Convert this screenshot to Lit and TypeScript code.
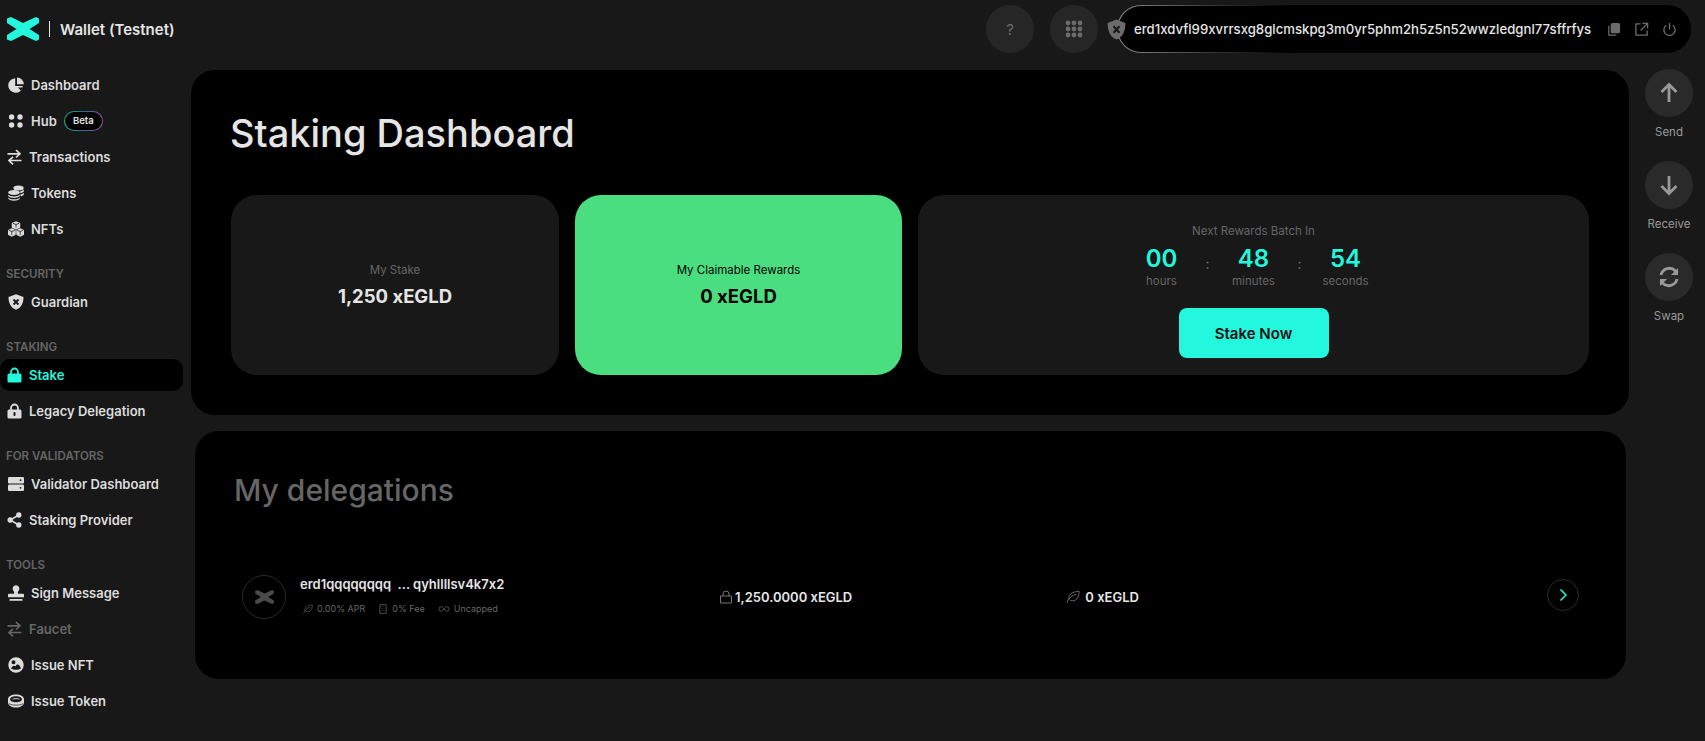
import { LitElement, html, css, svg } from "lit";
import { customElement } from "lit/decorators.js";

const icons: Record<string, any> = {
  pie: svg`<path d="M7.200 1.200A7.300 7.300 0 1 0 14.800 9H7.200Z"/><path d="M9 .4a6.800 6.800 0 0 1 6.800 6.800H9Z"/><path d="M10 10.400h5l-2 3.300Z" fill="#181818"/>`,
  dots: svg`<circle cx="3.600" cy="4" r="2.700"/><circle cx="12" cy="4" r="2.700"/><circle cx="3.600" cy="12" r="2.700"/><circle cx="12" cy="12" r="2.700"/>`,
  swap: svg`<path d="M0 4.800h12.500M8.500 1l4 3.800-4 3.700M14 11.500H1.500M5.500 7.800l-4 3.700 4 3.800" fill="none" stroke="currentColor" stroke-width="1.700"/>`,
  coins: svg`<ellipse cx="10.500" cy="3" rx="5.200" ry="2.500"/><path d="M12.300 6.200c1.500-.2 2.800-.8 3.500-1.600v2c-.6.800-2 1.400-3.500 1.600ZM12.500 9.300c1.400-.2 2.700-.8 3.300-1.600v2c-.6.800-1.900 1.400-3.300 1.600Z"/><ellipse cx="6" cy="7.500" rx="5.800" ry="2.600"/><path d="M.2 9.400c1 1.300 3.300 2 5.800 2s4.800-.7 5.800-2v1.600c-1 1.300-3.300 2-5.800 2s-4.800-.7-5.800-2ZM.2 12.400c1 1.300 3.300 1.900 5.800 1.900s4.800-.6 5.800-1.900v1.400c-1 1.300-3.300 2-5.800 2s-4.800-.7-5.800-2Z"/>`,
  cubes: svg`<path d="M8 .3 12.200 2v4.700L8 8.400 3.800 6.700V2Z"/><path d="M3.800 7.300 7.700 9v4.700L3.800 15.700 0 13.700V9ZM12.200 7.300 16 9v4.700l-3.800 2-3.900-2V9Z"/><path d="M8 3.500 5 2.300M8 3.500l3-1.200M8 3.500v3M3.800 10.500.8 9.300M3.800 10.500l3-1.200M3.800 10.500v3.500M12.200 10.500l-3-1.200M12.200 10.500l3-1.200M12.200 10.500v3.500" stroke="#181818" stroke-width=".8" fill="none"/>`,
  guard: svg`<path d="M8 .3 15.500 3c0 6-2 10.500-7.500 12.700C2.500 13.500.5 9 .5 3Z"/><path d="M5.500 5.500l5 5M10.500 5.500l-5 5" stroke="#181818" stroke-width="1.800"/>`,
  lock: svg`<path d="M3.500 7V5a3.500 3.500 0 0 1 7 0v2" fill="none" stroke="currentColor" stroke-width="1.800"/><rect x="0" y="6.500" width="14" height="9" rx="1.500"/>`,
  lockhole: svg`<path d="M3.500 7V5a3.500 3.500 0 0 1 7 0v2" fill="none" stroke="currentColor" stroke-width="1.800"/><rect x="0" y="6.500" width="14" height="9" rx="1.500"/><rect x="6" y="9" width="2" height="4" rx="1" fill="#181818"/>`,
  server: svg`<rect x="0" y="1" width="16" height="6.400" rx="1.200"/><rect x="0" y="8.600" width="16" height="6.400" rx="1.200"/><circle cx="12.500" cy="4.200" r=".9" fill="#181818"/><circle cx="12.500" cy="11.800" r=".9" fill="#181818"/>`,
  share: svg`<circle cx="11.300" cy="3" r="2.700"/><circle cx="11.300" cy="13" r="2.700"/><circle cx="2.700" cy="8" r="2.700"/><path d="M11.300 3 2.700 8l8.600 5" fill="none" stroke="currentColor" stroke-width="1.500"/>`,
  stamp: svg`<path d="M8 .3a3.400 3.400 0 0 1 2.500 5.700c-.6.700-.8 1.300-.6 2.800H15a1 1 0 0 1 1 1v2.400H0v-2.400a1 1 0 0 1 1-1h5.100c.2-1.500 0-2.100-.6-2.800A3.400 3.400 0 0 1 8 .3Z"/><rect x="1.500" y="14" width="13" height="1.800" rx=".5"/>`,
  face: svg`<path fill-rule="evenodd" d="M8 .3a7.700 7.700 0 1 1 0 15.400A7.700 7.700 0 0 1 8 .3ZM5.500 3.200a2 2 0 1 0 0 4 2 2 0 0 0 0-4ZM3 11.500c1.500-3 3-3.500 4.500-2.200 1.500-2.600 3.800-2.400 5.500 2.200-2.800 1.700-7.200 1.700-10 0Z"/>`,
  ring: svg`<path fill-rule="evenodd" d="M8 1.500c4.400 0 8 1.900 8 4.700v3.300c0 2.900-3.600 5-8 5s-8-2.100-8-5V6.200c0-2.800 3.600-4.700 8-4.700Zm0 1.700c-3.400 0-5.900 1.200-5.900 3s2.500 3 5.900 3 5.900-1.200 5.900-3-2.500-3-5.900-3Z"/><path d="M4.500 6.200c1-.8 6-.8 7 0" stroke="currentColor" stroke-width=".9" fill="none"/><path d="M1 10.500c2 2.200 12 2.200 14 0" stroke="#181818" stroke-width=".7" fill="none"/>`,
};

type NavItem = { label: string; icon: string; narrow?: boolean; active?: boolean; dim?: boolean; badge?: boolean };
type NavGroup = { title?: string; items: NavItem[] };

const nav: NavGroup[] = [
  {
    items: [
      { label: "Dashboard", icon: "pie" },
      { label: "Hub", icon: "dots", badge: true },
      { label: "Transactions", icon: "swap", narrow: true },
      { label: "Tokens", icon: "coins" },
      { label: "NFTs", icon: "cubes" },
    ],
  },
  { title: "SECURITY", items: [{ label: "Guardian", icon: "guard" }] },
  {
    title: "STAKING",
    items: [
      { label: "Stake", icon: "lock", narrow: true, active: true },
      { label: "Legacy Delegation", icon: "lockhole", narrow: true },
    ],
  },
  {
    title: "FOR VALIDATORS",
    items: [
      { label: "Validator Dashboard", icon: "server" },
      { label: "Staking Provider", icon: "share", narrow: true },
    ],
  },
  {
    title: "TOOLS",
    items: [
      { label: "Sign Message", icon: "stamp" },
      { label: "Faucet", icon: "swap", narrow: true, dim: true },
      { label: "Issue NFT", icon: "face" },
      { label: "Issue Token", icon: "ring" },
    ],
  },
];

const leaf = svg`<path d="M1 15c2-6 6-9 11-10M3.500 11C2 6 6 2 15 1.500c0 8-4 12-10 10.500" fill="none" stroke="currentColor" stroke-width="1"/>`;

@customElement("app-root")
export class AppRoot extends LitElement {
  static styles = css`
    :host {
      display: block;
      height: 741px;
      overflow: hidden;
      background: #181818;
      color: #e5e5e5;
      font-family: Inter, "Noto Sans", sans-serif;
      font-feature-settings: "calt" 0;
    }
    .header {
      height: 69px;
      box-sizing: border-box;
      display: flex;
      align-items: center;
      padding: 0 14px 11px 0;
    }
    .logo {
      width: 32px;
      height: 24px;
      margin-left: 7px;
      fill: #23f7dd;
    }
    .bar {
      width: 1px;
      height: 16px;
      background: #e5e5e5;
      margin: 0 10px 0 10px;
    }
    .brand {
      font-size: 15px;
      font-weight: 600;
      color: #e5e5e5;
      flex: 1;
    }
    .round {
      width: 48px;
      height: 48px;
      border-radius: 50%;
      background: #262626;
      color: #6b6b6b;
      display: flex;
      align-items: center;
      justify-content: center;
      font-size: 15px;
      margin-right: 16px;
    }
    .round svg { width: 18px; height: 18px; fill: #6b6b6b; }
    .round.last { margin-right: 9px; }
    .hshield {
      width: 19px;
      height: 21px;
      fill: #6b6b6b;
      margin-right: -9px;
      position: relative;
      z-index: 1;
    }
    .account {
      width: 574px;
      height: 48px;
      box-sizing: border-box;
      border: 1px solid transparent;
      border-radius: 24px;
      background: linear-gradient(#000, #000) padding-box,
        linear-gradient(90deg, #8a8a8a, #333 18%, #000 30%) border-box;
      display: flex;
      align-items: center;
      padding-left: 16px;
      color: #6b6b6b;
    }
    .addr {
      font-size: 13.200px;
      font-weight: 500;
      color: #e5e5e5;
      width: 472px;
      white-space: nowrap;
    }
    .account svg { width: 15px; height: 15px; margin-right: 13px; }
    .layout {
      display: grid;
      grid-template-columns: 191px 1fr 76px;
    }
    .side { display: flex; flex-direction: column; }
    .group { display: flex; flex-direction: column; gap: 4px; }
    .group.titled { margin-top: 18.500px; }
    .gtitle {
      height: 20px;
      line-height: 20px;
      margin-bottom: -1.500px;
      padding-left: 6px;
      font-size: 11.500px;
      font-weight: 600;
      color: #666;
    }
    .item {
      width: 183px;
      height: 32px;
      box-sizing: border-box;
      padding-left: 8px;
      display: flex;
      align-items: center;
      gap: 7px;
      font-size: 13px;
      font-weight: 600;
      color: #dcdcdc;
      border-radius: 10px;
    }
    .item svg { width: 16px; height: 16px; fill: currentColor; flex: none; }
    .item.narrow { padding-left: 7px; gap: 7px; }
    .item.narrow svg { width: 15px; }
    .item.active { background: #000; color: #23f7dd; }
    .item.dim { color: #666; }
    .beta {
      width: 39px;
      height: 20px;
      box-sizing: border-box;
      border: 1px solid transparent;
      border-radius: 10px;
      background: linear-gradient(#000, #000) padding-box,
        linear-gradient(90deg, #1bb98a, #2a6a8a 50%, #a04fa8) border-box;
      font-size: 9.500px;
      line-height: 18px;
      text-align: center;
      color: #e5e5e5;
    }
    .main { padding-top: 1px; display: flex; flex-direction: column; gap: 16px; }
    .card {
      background: #000;
      border-radius: 24px;
    }
    .top { padding: 39px 40px 40px 40px; }
    h1 {
      margin: 0 0 38px -1px;
      font-size: 38px;
      line-height: 48px;
      font-weight: 500;
      color: #e5e5e5;
    }
    .stats {
      display: grid;
      grid-template-columns: 328px 327px 1fr;
      gap: 16px;
    }
    .stat {
      height: 180px;
      box-sizing: border-box;
      padding-top: 1px;
      background: #181818;
      border-radius: 26px;
      display: flex;
      flex-direction: column;
      align-items: center;
      justify-content: center;
      gap: 5px;
    }
    .stat .lbl { font-size: 11.500px; line-height: 16px; color: #666; }
    .stat .val { font-size: 18.500px; line-height: 26px; font-weight: 700; color: #e5e5e5; }
    .stat.green { background: #4ade80; }
    .stat.green .lbl { color: #000; }
    .stat.green .val { color: #000; }
    .stat.timer { justify-content: flex-start; padding-top: 28px; gap: 0; }
    .clock { display: flex; margin-top: 5px; }
    .cell { width: 60px; text-align: center; }
    .digits { font-size: 24px; line-height: 29px; font-weight: 600; color: #23f7dd; }
    .unit { font-size: 11.500px; line-height: 16px; color: #666; }
    .colon { width: 32px; text-align: center; font-size: 14px; line-height: 16px; margin-top: 12px; color: #777; }
    .cta {
      margin-top: 19px;
      width: 150px;
      height: 50px;
      border-radius: 8px;
      background: #23f7dd;
      color: #111;
      font-size: 15px;
      font-weight: 600;
      display: flex;
      align-items: center;
      justify-content: center;
    }
    .delegations {
      margin: 0 3px 0 4px;
      height: 248px;
      box-sizing: border-box;
      padding: 39px 47px 0 39px;
    }
    h2 {
      margin: 0 0 65px;
      font-size: 30px;
      line-height: 40px;
      font-weight: 500;
      color: #666;
    }
    .row {
      display: grid;
      grid-template-columns: 477px 347px 1fr 32px;
      align-items: center;
      padding-left: 8px;
      height: 44px;
    }
    .who { display: flex; align-items: flex-start; gap: 14px; }
    .avatar {
      width: 44px;
      height: 44px;
      box-sizing: border-box;
      border: 1px solid #2a2a2a;
      border-radius: 50%;
      display: flex;
      align-items: center;
      justify-content: center;
    }
    .avatar svg { width: 19px; height: 14px; fill: #4a4a4a; }
    .name {
      font-size: 13px;
      line-height: 18px;
      font-weight: 600;
      color: #e5e5e5;
      white-space: pre;
    }
    .meta {
      margin-top: 9px;
      padding-left: 3px;
      display: flex;
      gap: 13px;
      font-size: 9px;
      line-height: 14px;
      color: #666;
    }
    .meta span { display: flex; align-items: center; gap: 4px; }
    .meta svg { width: 10px; height: 10px; }
    .amount {
      display: flex;
      align-items: center;
      gap: 2px;
      font-size: 13px;
      font-weight: 600;
      color: #e5e5e5;
    }
    .amount svg { width: 14px; height: 14px; color: #777; }
    .go {
      width: 32px;
      height: 32px;
      box-sizing: border-box;
      border: 1px solid #2a2a2a;
      border-radius: 50%;
      display: flex;
      align-items: center;
      justify-content: center;
      margin-top: -4px;
    }
    .go svg { width: 14px; height: 14px; }
    .actions {
      display: flex;
      flex-direction: column;
      align-items: flex-end;
      padding: 0 12px 0 0;
    }
    .act {
      width: 48px;
      display: flex;
      flex-direction: column;
      align-items: center;
      height: 92px;
      font-size: 11.500px;
      color: #999;
      white-space: nowrap;
    }
    .disc {
      width: 48px;
      height: 48px;
      border-radius: 50%;
      background: #2a2a2a;
      display: flex;
      align-items: center;
      justify-content: center;
      margin-bottom: 8px;
      flex: none;
    }
    .disc svg { width: 24px; height: 24px; stroke: #999; fill: none; stroke-width: 2.800; }
  `;

  private xLogo(cls: string) {
    return html`<svg class=${cls} viewBox="0 0 32 24">
      <path d="M0 1.500 4 0 16 6 29 0 32 1.500 32 6 22.500 12 32 18 32 22.500 29 24 16 18 4 24 0 22.500 0 18 9.500 12 0 6Z" />
    </svg>`;
  }

  private renderItem(it: NavItem) {
    const cls = ["item", it.narrow ? "narrow" : "", it.active ? "active" : "", it.dim ? "dim" : ""].join(" ");
    return html`<div class=${cls}>
      <svg viewBox=${it.narrow ? "0 0 14 16" : "0 0 16 16"}>${icons[it.icon]}</svg>
      <span>${it.label}</span>
      ${it.badge ? html`<span class="beta">Beta</span>` : ""}
    </div>`;
  }

  render() {
    return html`
      <div class="header">
        ${this.xLogo("logo")}
        <div class="bar"></div>
        <div class="brand">Wallet (Testnet)</div>
        <div class="round">?</div>
        <div class="round last">
          <svg viewBox="0 0 18 18">
            ${[3, 9, 15].map((y) => [3, 9, 15].map((x) => svg`<circle cx=${x} cy=${y} r="2.400" />`))}
          </svg>
        </div>
        <svg class="hshield" viewBox="0 0 16 16" preserveAspectRatio="none">${icons.guard}</svg>
        <div class="account">
          <div class="addr">erd1xdvfl99xvrrsxg8glcmskpg3m0yr5phm2h5z5n52wwzledgnl77sffrfys</div>
          <svg viewBox="0 0 16 16" fill="currentColor">
            <rect x="5" y="1" width="10" height="11" rx="2" />
            <path d="M3 4v10h8" fill="none" stroke="currentColor" stroke-width="1.300" />
          </svg>
          <svg viewBox="0 0 16 16" fill="none" stroke="currentColor" stroke-width="1.400">
            <path d="M7 2H2v12h12V9M9 1.500h5.500V7M14.500 1.500 7 9" />
          </svg>
          <svg viewBox="0 0 16 16" fill="none" stroke="currentColor" stroke-width="1.400">
            <path d="M8 1v7M4.500 3.500a6 6 0 1 0 7 0" />
          </svg>
        </div>
      </div>
      <div class="layout">
        <nav class="side">
          ${nav.map(
            (g) => html`<div class="group ${g.title ? "titled" : ""}">
              ${g.title ? html`<div class="gtitle">${g.title}</div>` : ""}
              ${g.items.map((it) => this.renderItem(it))}
            </div>`
          )}
        </nav>
        <main class="main">
          <section class="card top">
            <h1>Staking Dashboard</h1>
            <div class="stats">
              <div class="stat">
                <div class="lbl">My Stake</div>
                <div class="val">1,250 xEGLD</div>
              </div>
              <div class="stat green">
                <div class="lbl">My Claimable Rewards</div>
                <div class="val">0 xEGLD</div>
              </div>
              <div class="stat timer">
                <div class="lbl">Next Rewards Batch In</div>
                <div class="clock">
                  <div class="cell"><div class="digits">00</div><div class="unit">hours</div></div>
                  <div class="colon">:</div>
                  <div class="cell"><div class="digits">48</div><div class="unit">minutes</div></div>
                  <div class="colon">:</div>
                  <div class="cell"><div class="digits">54</div><div class="unit">seconds</div></div>
                </div>
                <div class="cta">Stake Now</div>
              </div>
            </div>
          </section>
          <section class="card delegations">
            <h2>My delegations</h2>
            <div class="row">
              <div class="who">
                <div class="avatar">${this.xLogo("")}</div>
                <div>
                  <div class="name">erd1qqqqqqqq  ... qyhllllsv4k7x2</div>
                  <div class="meta">
                    <span><svg viewBox="0 0 16 16">${leaf}</svg>0.00% APR</span>
                    <span>
                      <svg viewBox="0 0 16 16" fill="none" stroke="currentColor" stroke-width="1.200">
                        <path d="M3 1h10v14H3ZM6 4h1M9 4h1M6 7h1M9 7h1M6 10h1M9 10h1" />
                      </svg>0% Fee
                    </span>
                    <span>
                      <svg viewBox="0 0 16 16" style="width:12px" fill="none" stroke="currentColor" stroke-width="1.200">
                        <path d="M8 8C6 5 4.500 4.500 3.300 4.500a3.500 3.500 0 0 0 0 7C4.500 11.500 6 11 8 8s3.500-3.500 4.700-3.500a3.500 3.500 0 0 1 0 7C11.500 11.500 10 11 8 8Z" />
                      </svg>Uncapped
                    </span>
                  </div>
                </div>
              </div>
              <div class="amount">
                <svg viewBox="0 0 14 14" fill="none" stroke="currentColor" stroke-width="1">
                  <path d="M4 6V4a3 3 0 0 1 6 0v2M1.500 6h11v7h-11Z" />
                </svg>
                1,250.0000 xEGLD
              </div>
              <div class="amount"><svg viewBox="0 0 16 16">${leaf}</svg>&nbsp;0 xEGLD</div>
              <div class="go">
                <svg viewBox="0 0 14 14" fill="none" stroke="#23f7dd" stroke-width="1.500">
                  <path d="M4.500 1.500 10 7l-5.500 5.500" />
                </svg>
              </div>
            </div>
          </section>
        </main>
        <aside class="actions">
          <div class="act">
            <div class="disc"><svg viewBox="0 0 24 24"><path d="M12 21V4M4.500 11 12 3.500l7.500 7.500" /></svg></div>
            Send
          </div>
          <div class="act">
            <div class="disc"><svg viewBox="0 0 24 24"><path d="M12 3v17M4.500 13l7.500 7.500 7.500-7.500" /></svg></div>
            Receive
          </div>
          <div class="act">
            <div class="disc">
              <svg viewBox="0 0 24 24">
                <path d="M4 10a8.500 8.500 0 0 1 14.500-4l2 2M20 14a8.500 8.500 0 0 1-14.500 4l-2-2" />
                <path d="M21 3v7h-7ZM3 21v-7h7Z" fill="#999" stroke="none" />
              </svg>
            </div>
            Swap
          </div>
        </aside>
      </div>
    `;
  }
}
